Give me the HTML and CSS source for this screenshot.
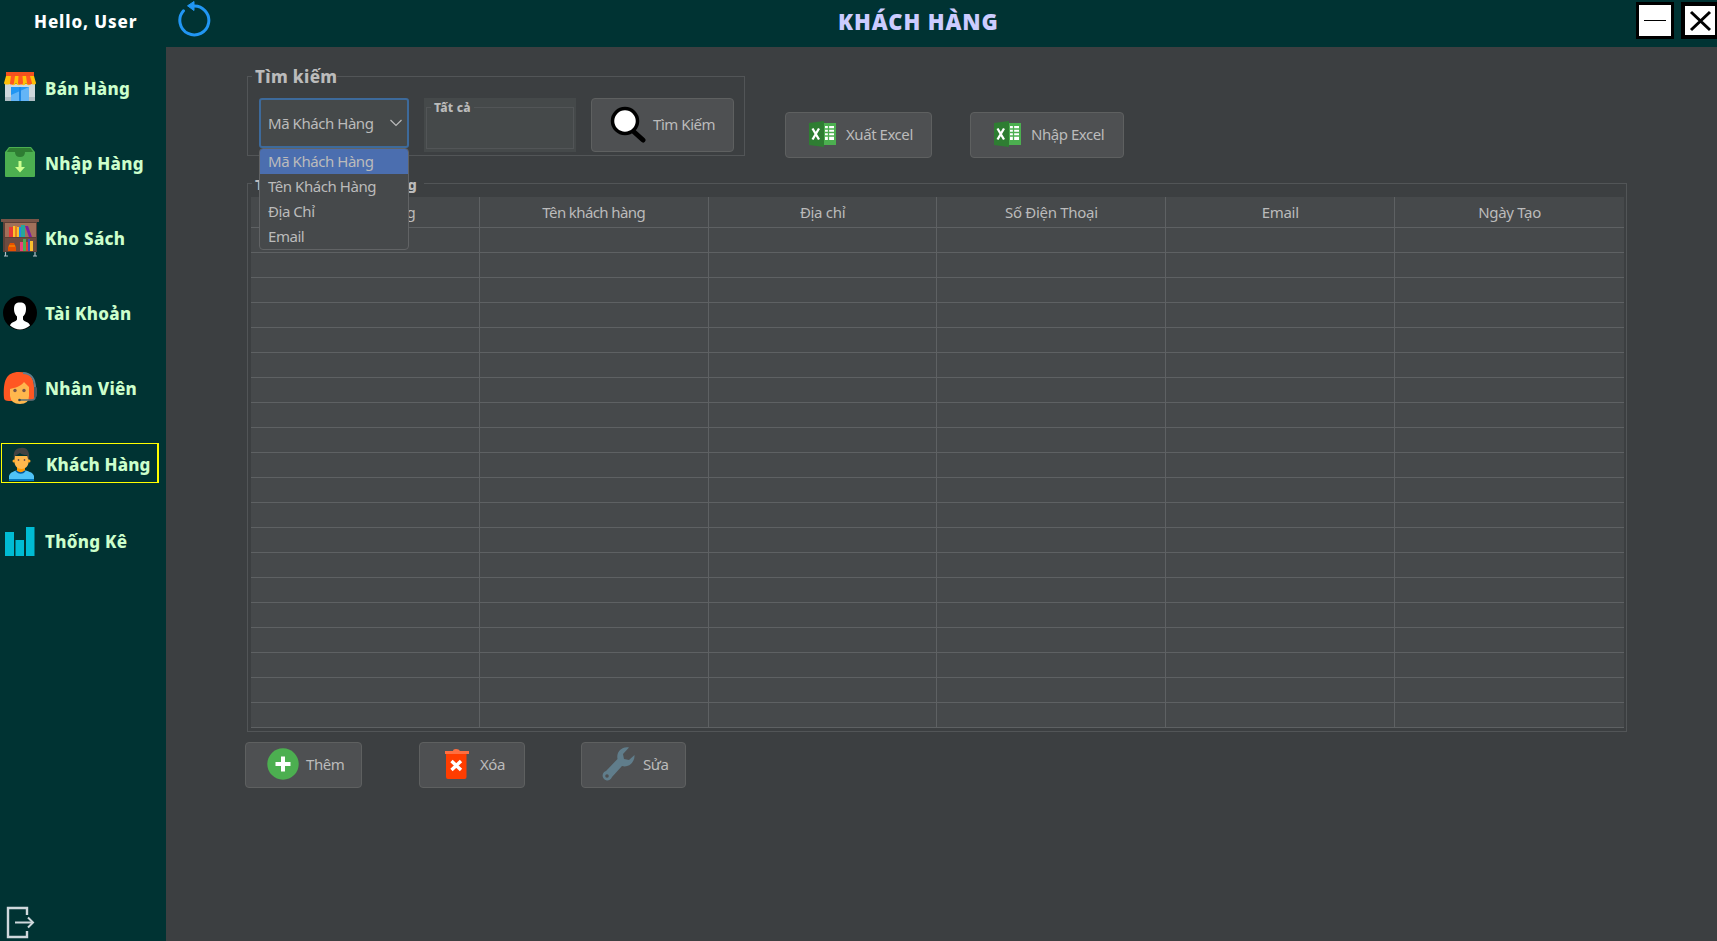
FILE: index.html
```html
<!DOCTYPE html>
<html lang="vi">
<head>
<meta charset="utf-8">
<title>Khách Hàng</title>
<link rel="stylesheet" href="styles.css">
</head>
<body>
<div class="app">
  <aside class="sidebar">
    <div class="hello">Hello, User</div>
    <nav class="nav">
      <a class="nav-item">
        <svg width="34" height="34" viewBox="0 0 34 34"><path d="M2 13h30v17H2z" fill="#cfd8dc"/><path d="M2 26h6v4H2zM26 26h6v4h-6z" fill="#b0bec5"/><path d="M8 16h18v14H8z" fill="#64b5f6"/><path d="M8 16h18l-18 8z" fill="#2196f3"/><path d="M16 16h2v14h-2z" fill="#1e88e5"/><path d="M3 1h28v4H3z" fill="#f4511e"/><path d="M3 5h28l2 7c0 2-4 2-5 0-1 3-4 3-5 0-1 3-4 3-5 0-1 3-4 3-5 0-1 3-4 3-5 0-1 2-7 2-7 0z" fill="#ffc107"/><path d="M8 5h4l-1 7c0 2-5 2-4 0zM15.500 5h4l.5 7c0 2-5 2-5 0zM23 5h4l2 7c0 2-5 2-5 0z" fill="#ff5722"/></svg>
        <span>Bán Hàng</span></a>
      <a class="nav-item">
        <svg width="34" height="34" viewBox="0 0 34 34"><path d="M6 1h22l4 5v24q0 1-1 1H3q-1 0-1-1V6z" fill="#4caf50"/><path d="M6.500 2h21l2.500 4h-8q0 5-5 5t-5-5H4z" fill="#2e7d32"/><path d="M15.500 15h3v6h3.500l-5 5.500-5-5.500h3.500z" fill="#ccff90"/></svg>
        <span>Nhập Hàng</span></a>
      <a class="nav-item">
        <svg class="shelf" width="38" height="38" viewBox="0 0 38 38"><path d="M2 3h34v30H2z" fill="#5d4037"/><path d="M4 4h31v14H4z" fill="#a1705a"/><path d="M4 19h31v13H4z" fill="#6d4c41"/><path d="M0 0h38v3H0z" fill="#795548"/><path d="M8 8h4v10H8z" fill="#e53935"/><path d="M12 7h2v11h-2zM16 8h2v10h-2z" fill="#fbc02d"/><path d="M14 7h2v11h-2z" fill="#e67e22"/><path d="M18 8h2v10h-2z" fill="#1e88e5"/><path d="M20 6h4v12h-4z" fill="#26a69a"/><path d="M24 7h3l4 11h-3z" fill="#7b1fa2"/><path d="M7 32v-4l2-4h4l2 4v4z" fill="#e65100"/><path d="M8 27h6" stroke="#ffa000" stroke-width="1"/><path d="M19 23h3v9h-3z" fill="#ec407a"/><path d="M22 20h3v12h-3z" fill="#4caf50"/><path d="M25 23h2v9h-2z" fill="#e53935"/><path d="M27 20h2v12h-2z" fill="#3f51b5"/><path d="M29 22h3v10h-3z" fill="#fbc02d"/><path d="M4.500 33v4M3 37h4M34 33v4M32 37h4" stroke="#b0bec5" stroke-width="1.200"/></svg>
        <span>Kho Sách</span></a>
      <a class="nav-item">
        <svg width="34" height="34" viewBox="0 0 34 34"><circle cx="17" cy="17" r="17" fill="#000"/><path d="M11 13c0-5 2-6.500 6-6.500s6 1.500 6 6.500c0 3-1 6-3 7.500v3c1 2.500 6 2 7 6q-5 4-10 4T7 29.500c1-4 6-3.500 7-6v-3c-2-1.500-3-4.500-3-7.500z" fill="#fff"/></svg>
        <span>Tài Khoản</span></a>
      <a class="nav-item">
        <svg class="agent" width="35" height="34" viewBox="0 0 35 34"><path d="M1 27C0 10 3 1 16 1c12 0 15 7 15 15v13l-9 1H6q-5 0-5-3z" fill="#ff5722"/><path d="M7 18c5-1 11-3 14-7l5 5v9q0 8-9 8T7 25z" fill="#ffb74d"/><path d="M20 2c8 0 12 6 12 15" fill="none" stroke="#607d8b" stroke-width="2"/><path d="M31 16h2q1 0 1 2v6q0 2-1 2h-2z" fill="#455a64"/><path d="M32 26q0 3-3 3H16" fill="none" stroke="#546e7a" stroke-width="1.500"/><circle cx="12" cy="19.500" r="1.700" fill="#795548"/><circle cx="21" cy="19.500" r="1.700" fill="#795548"/><circle cx="16.500" cy="29" r="1.300" fill="#37474f"/></svg>
        <span>Nhân Viên</span></a>
      <a class="nav-item active">
        <svg width="34" height="34" viewBox="0 0 34 34"><path d="M5 34v-5c1-4 6-5 9-6h6c3 1 9 2 10 6v5z" fill="#4fc3f7"/><path d="M5 32h25v2H5z" fill="#0277bd"/><path d="M13 20h8v4q-4 4-8 0z" fill="#ff9800"/><path d="M12 24q5 4 9 0" fill="none" stroke="#01579b" stroke-width="1.500"/><path d="M10.500 9h14v6c0 4-3 7-7 7s-7-3-7-7z" fill="#ffb74d"/><circle cx="10" cy="14" r="1.500" fill="#ffa726"/><circle cx="25" cy="14" r="1.500" fill="#ffa726"/><path d="M10 12c-1-7 1-11 7-11 6-1 9 4 8 11h-1l-1-4q-5 0-7-2l-5 3z" fill="#424242"/><path d="M14.500 12v2M20.500 12v2" stroke="#795548" stroke-width="1.400"/></svg>
        <span>Khách Hàng</span></a>
      <a class="nav-item last">
        <svg width="34" height="34" viewBox="0 0 34 34"><path d="M2 8h9v24H2zM12.500 16H21v16h-8.500zM23 3h8.500v29H23z" fill="#00bcd4"/></svg>
        <span>Thống Kê</span></a>
    </nav>
    <svg class="logout" width="30" height="33" viewBox="0 0 30 33"><path d="M21 9V2H2v29h19v-6" fill="none" stroke="#cfd8dc" stroke-width="2.400"/><path d="M9 16.500h17" stroke="#cfd8dc" stroke-width="2"/><path d="M22 11.500l5 5-5 5" fill="none" stroke="#cfd8dc" stroke-width="2"/></svg>
  </aside>

  <header class="topbar">
    <svg class="refresh" width="34" height="36" viewBox="0 0 34 36"><path d="M5.500 9.800A14.500 14.500 0 1 0 15 5" fill="none" stroke="#2196f3" stroke-width="3" stroke-linecap="round"/><path d="M9.500 4.800L16 .5V9.500z" fill="#2196f3" stroke="#2196f3" stroke-linejoin="round"/></svg>
    <h1>KHÁCH HÀNG</h1>
    <div class="window-buttons">
      <div class="minimize"><svg width="32" height="31" viewBox="0 0 32 31"><path d="M5 15.500h22" stroke="#000" stroke-width="1"/></svg></div>
      <div class="close"><svg width="32" height="29" viewBox="0 0 32 29"><path d="M6 6l19 18M25 6L6 24" stroke="#000" stroke-width="3"/></svg></div>
    </div>
  </header>

  <main class="content">
    <section class="tools">
      <div class="group search">
        <span class="group-title">Tìm kiếm</span>
        <div class="combo"><span>Mã Khách Hàng</span><svg width="12" height="8" viewBox="0 0 12 8"><path d="M.5 1l5.500 5.500L11.500 1" fill="none" stroke="#bbb" stroke-width="1.200"/></svg>
          <ul class="popup"><li class="selected">Mã Khách Hàng</li><li>Tên Khách Hàng</li><li>Địa Chỉ</li><li>Email</li></ul>
        </div>
        <div class="input"><div class="input-frame"><span class="input-title">Tất cả</span></div></div>
        <div class="btn find"><svg width="36" height="37" viewBox="0 0 36 37"><path d="M23 25l10 9" stroke="#000" stroke-width="5" stroke-linecap="round"/><circle cx="15" cy="15" r="12.500" fill="#fff" stroke="#000" stroke-width="3.500"/></svg><span>Tìm Kiếm</span></div>
      </div>
      <div class="btn export"><svg width="30" height="28" viewBox="0 0 30 28"><path d="M15 3h13v22H15z" fill="#4caf50"/><path d="M17 6h9v14h-9z" fill="#fff"/><path d="M16 9h11M16 12.500h11M16 16h11M20.500 5v17" stroke="#4caf50" stroke-width="1.300"/><path d="M1 3l15-2v26L1 25z" fill="#2e7d32"/><path d="M4.500 8.500l6.500 11M11 8.500l-6.500 11" stroke="#fff" stroke-width="2.300"/></svg><span>Xuất Excel</span></div>
      <div class="btn import"><svg width="30" height="28" viewBox="0 0 30 28"><path d="M15 3h13v22H15z" fill="#4caf50"/><path d="M17 6h9v14h-9z" fill="#fff"/><path d="M16 9h11M16 12.500h11M16 16h11M20.500 5v17" stroke="#4caf50" stroke-width="1.300"/><path d="M1 3l15-2v26L1 25z" fill="#2e7d32"/><path d="M4.500 8.500l6.500 11M11 8.500l-6.500 11" stroke="#fff" stroke-width="2.300"/></svg><span>Nhập Excel</span></div>
    </section>

    <section class="group listing">
      <span class="group-title listing-title">Thông tin khách hàng</span>
      <table>
        <thead><tr><th>Mã khách hàng</th><th>Tên khách hàng</th><th>Địa chỉ</th><th>Số Điện Thoại</th><th>Email</th><th>Ngày Tạo</th></tr></thead>
        <tbody>
          <tr><td></td><td></td><td></td><td></td><td></td><td></td></tr>
          <tr><td></td><td></td><td></td><td></td><td></td><td></td></tr>
          <tr><td></td><td></td><td></td><td></td><td></td><td></td></tr>
          <tr><td></td><td></td><td></td><td></td><td></td><td></td></tr>
          <tr><td></td><td></td><td></td><td></td><td></td><td></td></tr>
          <tr><td></td><td></td><td></td><td></td><td></td><td></td></tr>
          <tr><td></td><td></td><td></td><td></td><td></td><td></td></tr>
          <tr><td></td><td></td><td></td><td></td><td></td><td></td></tr>
          <tr><td></td><td></td><td></td><td></td><td></td><td></td></tr>
          <tr><td></td><td></td><td></td><td></td><td></td><td></td></tr>
          <tr><td></td><td></td><td></td><td></td><td></td><td></td></tr>
          <tr><td></td><td></td><td></td><td></td><td></td><td></td></tr>
          <tr><td></td><td></td><td></td><td></td><td></td><td></td></tr>
          <tr><td></td><td></td><td></td><td></td><td></td><td></td></tr>
          <tr><td></td><td></td><td></td><td></td><td></td><td></td></tr>
          <tr><td></td><td></td><td></td><td></td><td></td><td></td></tr>
          <tr><td></td><td></td><td></td><td></td><td></td><td></td></tr>
          <tr><td></td><td></td><td></td><td></td><td></td><td></td></tr>
          <tr><td></td><td></td><td></td><td></td><td></td><td></td></tr>
          <tr><td></td><td></td><td></td><td></td><td></td><td></td></tr>
        </tbody>
      </table>
    </section>

    <section class="actions">
      <div class="btn add"><svg width="32" height="32" viewBox="0 0 32 32"><circle cx="16" cy="16" r="15.700" fill="#4caf50"/><path d="M16 8.500v15M8.500 16h15" stroke="#fff" stroke-width="4"/></svg><span>Thêm</span></div>
      <div class="btn del"><svg width="26" height="32" viewBox="0 0 26 32"><path d="M2 5h20.500v24q0 2-2 2H4q-2 0-2-2z" fill="#ff3d00"/><path d="M1 3h8q0-2 3-2t4 2h9v3H1z" fill="#ff6e40"/><path d="M7.500 13l9.500 9M17 13l-9.500 9" stroke="#fff" stroke-width="3.400"/></svg><span>Xóa</span></div>
      <div class="btn edit"><svg width="34" height="34" viewBox="0 0 34 34"><path d="M27 .5C20-1 14 5 15.500 12L4 24a4.800 4.800 0 1 0 6 6l10-11c7 2 13-4 12.500-11L27 13l-5-1-1-5z" fill="#607d8b"/><circle cx="5" cy="29" r="1.800" fill="#4e5052"/></svg><span>Sửa</span></div>
    </section>
  </main>
</div>
</body>
</html>
```
FILE: styles.css
```css
* { box-sizing: border-box; }
body { margin: 0; overflow: hidden; font-family: "Noto Sans", "Open Sans", sans-serif; font-size: 15px; letter-spacing: -.45px; color: #bbb; background: #3c3f41; }
.app { display: grid; grid-template: 47px 894px / 166px 1551px; width: 1717px; height: 941px; }

.sidebar { grid-row: 1 / 3; background: #033; display: flex; flex-direction: column; font-weight: 800; font-size: 17px; letter-spacing: .3px; }
.hello { height: 47px; line-height: 44px; padding-left: 34px; color: #fff; letter-spacing: .9px; white-space: nowrap; }
.nav { display: flex; flex-direction: column; padding-top: 4px; }
.nav-item { display: flex; align-items: center; height: 75px; padding: 0 0 1px 3px; color: #cfc; white-space: nowrap; }
.nav-item svg { flex: none; margin-right: 8px; }
.nav-item .shelf { margin: 0 6px 0 -2px; }
.nav-item .agent { margin-right: 7px; }
.nav-item.active { height: 40px; width: 158px; margin: 17px 0 21px 1px; border: 1px solid #ff0; border-right-width: 2px; padding: 2px 0 0 2px; letter-spacing: .15px; }
.logout { margin: auto 0 2px 6px; }

.topbar { background: #033; display: flex; align-items: flex-start; }
.refresh { flex: none; margin: 1px 0 0 12px; }
h1 { flex: none; margin: 4px 0 0 626px; width: 170px; line-height: 34px; font-size: 22px; font-weight: 900; letter-spacing: .9px; color: #ccf; white-space: nowrap; }
.window-buttons { flex: none; display: flex; gap: 7px; margin: 2px 0 0 628px; }
.minimize, .close { flex: none; width: 38px; height: 37px; background: #fff; border: 3px solid #000; overflow: hidden; }
.close { border-width: 4px; }
.window-buttons svg { display: block; }

.content { display: flex; flex-direction: column; padding: 29px 0 0 79px; }
.tools { display: flex; padding-left: 2px; height: 80px; }
.group { position: relative; border: 1px solid #525557; }
.group-title { position: absolute; left: 4px; top: -12px; padding: 0 0 0 3px; background: #3c3f41; font-weight: 800; font-size: 17px; letter-spacing: .35px; line-height: 24px; white-space: nowrap; }
.search { width: 498px; height: 80px; padding: 21px 0 0 11px; display: flex; align-items: flex-start; }
.combo { position: relative; width: 150px; height: 50px; border: 2px solid #3d6a9b; border-radius: 3px; background: #45494a; padding: 0 5px 0 7px; display: flex; align-items: center; justify-content: space-between; }
.popup { position: absolute; z-index: 2; left: -2px; top: 48px; width: 150px; height: 102px; margin: 0; padding: 0; list-style: none; background: #46494b; border: 1px solid #616365; border-radius: 4px; overflow: hidden; }
.popup li { height: 25px; line-height: 24px; padding-left: 8px; white-space: nowrap; }
.popup .selected { background: #4b6eaf; }
.input { width: 152px; height: 54px; margin-left: 15px; padding: 9px 2px 3px; background: #45494a; }
.input-frame { position: relative; height: 42px; border: 1px solid #525557; }
.input-title { position: absolute; left: 4px; top: -8px; padding: 0 3px; background: #45494a; font-size: 12px; font-weight: 800; letter-spacing: .2px; line-height: 16px; white-space: nowrap; }
.btn { display: flex; align-items: center; flex: none; background: #4e5052; border: 1px solid #5e6060; border-radius: 4px; padding-bottom: 2px; white-space: nowrap; }
.btn svg { flex: none; }
.find { width: 143px; height: 54px; margin-left: 15px; padding-left: 18px; gap: 7px; }
.export, .import { height: 46px; margin-top: 36px; padding-left: 22px; gap: 8px; }
.export { width: 147px; margin-left: 40px; }
.import { width: 154px; margin-left: 38px; }

.listing { width: 1380px; height: 549px; margin: 27px 0 0 2px; padding: 13px 0 0 3px; }
.listing-title { font-size: 14.7px; letter-spacing: 0; top: -12px; padding-right: 7px; }
table { width: 1373px; border-collapse: separate; border-spacing: 0; table-layout: fixed; background: #46494b; }
th, td { padding: 0; border-right: 1px solid #5e6163; border-bottom: 1px solid #5e6163; height: 25px; }
th { height: 31px; font-weight: 400; line-height: 28px; letter-spacing: -.3px; }
th:nth-child(-n+2) { letter-spacing: -.6px; }
th:last-child, td:last-child { border-right: 0; }

.actions { display: flex; margin-top: 10px; }
.actions .btn { height: 46px; }
.actions .add { width: 117px; padding-left: 21px; gap: 7px; }
.actions .del { width: 106px; margin-left: 57px; padding-left: 24px; gap: 10px; }
.actions .edit { width: 105px; margin-left: 56px; padding-left: 20px; gap: 7px; }
```
